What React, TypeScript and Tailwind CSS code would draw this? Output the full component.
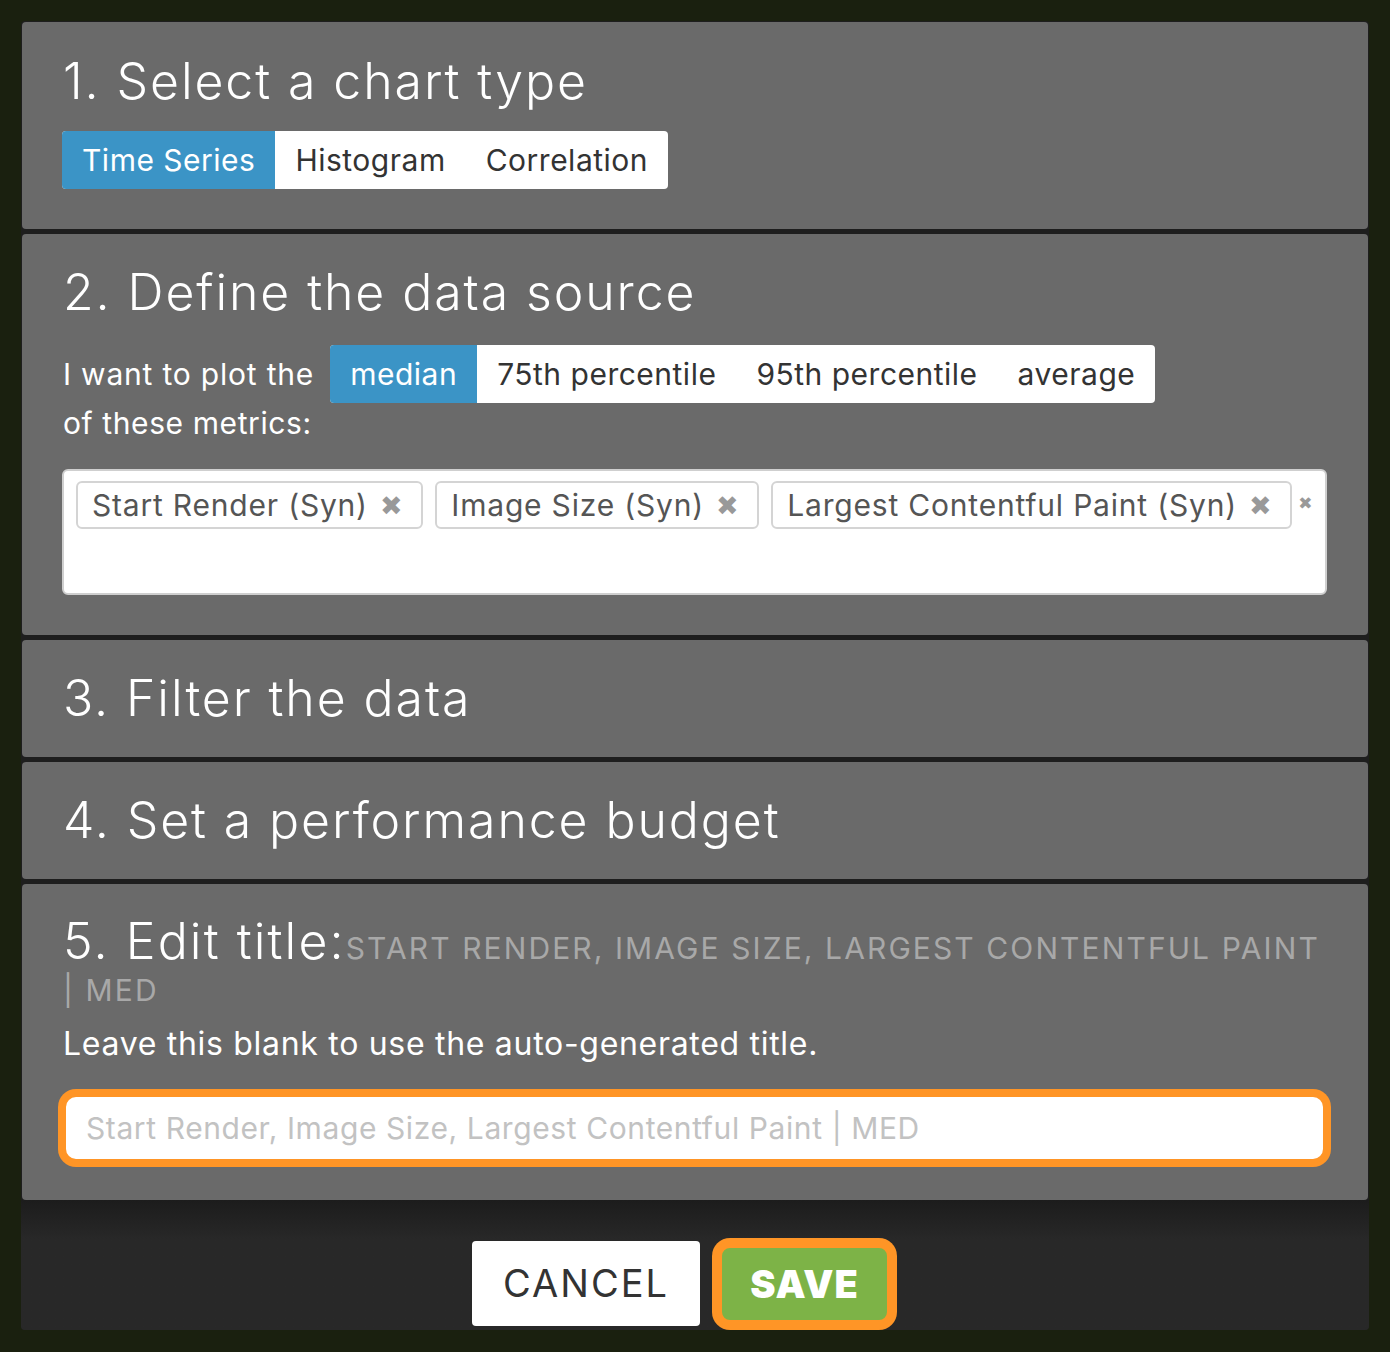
import React from "react";

const font = { fontFamily: "Inter, 'Noto Sans', sans-serif" };

function Seg({ items, active }: { items: string[]; active: number }) {
  return (
    <div className="inline-flex h-[58px] overflow-hidden rounded-[4px] bg-white">
      {items.map((t, i) => (
        <div
          key={t}
          className={
            "flex items-center whitespace-nowrap px-[20px] text-[30px] tracking-[0.5px] " +
            (i === active ? "bg-[#3b94c6] text-white" : "text-[#333333]")
          }
        >
          {t}
        </div>
      ))}
    </div>
  );
}

function Tag({ label }: { label: string }) {
  return (
    <div className="flex h-[48px] shrink-0 items-center gap-[12px] whitespace-nowrap rounded-[6px] border-2 border-[#d4d4d4] pl-[14px] pr-[18px] text-[30px] tracking-[0.8px] text-[#555555]">
      <span>{label}</span>
      <span className="text-[27px] leading-none text-[#999999]" style={{ fontFamily: "'DejaVu Sans', sans-serif" }}>✖</span>
    </div>
  );
}

const H = "text-[50px] font-light leading-[60px] tracking-[1.9px] text-white";

export default function App() {
  return (
    <div className="min-h-[1352px] bg-[#1a200f] p-[21px]" style={font}>
      <div className="flex flex-col rounded-[4px] bg-[#1e1e1e]">
        <div className="flex flex-col gap-[5px] p-[1px] pb-0">
          <section className="rounded-[4px] bg-[#6a6a6a] px-[41px] pb-[40px] pt-[29px]">
            <h2 className={H}>1. Select a chart type</h2>
            <div className="mt-[20px] -ml-[1px]">
              <Seg items={["Time Series", "Histogram", "Correlation"]} active={0} />
            </div>
          </section>

          <section className="rounded-[4px] bg-[#6a6a6a] px-[41px] pb-[40px] pt-[28px]">
            <h2 className={H}>2. Define the data source</h2>
            <div className="mt-[23px] flex items-center">
              <span className="whitespace-nowrap text-[30px] tracking-[0.8px] text-white">I want to plot the</span>
              <div className="ml-[16px]">
                <Seg items={["median", "75th percentile", "95th percentile", "average"]} active={0} />
              </div>
            </div>
            <div className="text-[30px] leading-[40px] tracking-[0.6px] text-white">of these metrics:</div>
            <div className="-ml-[1px] mt-[26px] h-[126px] rounded-[6px] border-2 border-[#cfcfcf] bg-white px-[12px] pt-[10px]">
              <div className="flex items-start gap-[12px]">
                <Tag label="Start Render (Syn)" />
                <Tag label="Image Size (Syn)" />
                <Tag label="Largest Contentful Paint (Syn)" />
                <span className="-ml-[6px] mt-[14px] shrink-0 text-[17px] leading-none text-[#999999]" style={{ fontFamily: "'DejaVu Sans', sans-serif" }}>✖</span>
              </div>
            </div>
          </section>

          <section className="rounded-[4px] bg-[#6a6a6a] px-[41px] pb-[29px] pt-[28px]">
            <h2 className={H}>3. Filter the data</h2>
          </section>

          <section className="rounded-[4px] bg-[#6a6a6a] px-[41px] pb-[29px] pt-[28px]">
            <h2 className={H}>4. Set a performance budget</h2>
          </section>

          <section className="rounded-[4px] bg-[#6a6a6a] px-[41px] pb-[37px] pt-[37px]">
            <h2 className="text-[50px] font-light leading-[40px] tracking-[2.1px] text-white">
              5. Edit title:
              <span className="text-[30px] font-normal uppercase leading-[30px] tracking-[2.1px] text-[#a8a8a8]">
                Start Render, Image Size, Largest Contentful Paint | MED
              </span>
            </h2>
            <p className="mt-[19px] text-[32px] leading-[40px] tracking-[0.7px] text-white">Leave this blank to use the auto-generated title.</p>
            <div className="mt-[29px] -ml-[1px]">
              <input
                readOnly
                placeholder="Start Render, Image Size, Largest Contentful Paint | MED"
                className="block h-[70px] w-full rounded-[14px] border-4 border-[#ff9526] bg-white px-[20px] text-[30px] tracking-[0.6px] text-[#333] shadow-[0_0_0_4px_#ff9526] outline-none placeholder:text-[#c2c2c2]"
                style={font}
              />
            </div>
          </section>
        </div>

        <div className="flex h-[130px] items-end justify-center gap-[16px] rounded-b-[4px] bg-gradient-to-b from-[#1c1c1c] to-[#282828] to-[30%] pb-[4px] pr-[25px]">
          <button className="h-[85px] w-[228px] rounded-[4px] bg-white text-[38px] tracking-[2px] text-[#333333]">CANCEL</button>
          <button className="h-[84px] w-[177px] rounded-[14px] border-[6px] border-[#ff9526] bg-[#7db347] text-[38px] font-black tracking-[1px] text-white shadow-[0_0_0_4px_#ff9526]">
            SAVE
          </button>
        </div>
      </div>
    </div>
  );
}
